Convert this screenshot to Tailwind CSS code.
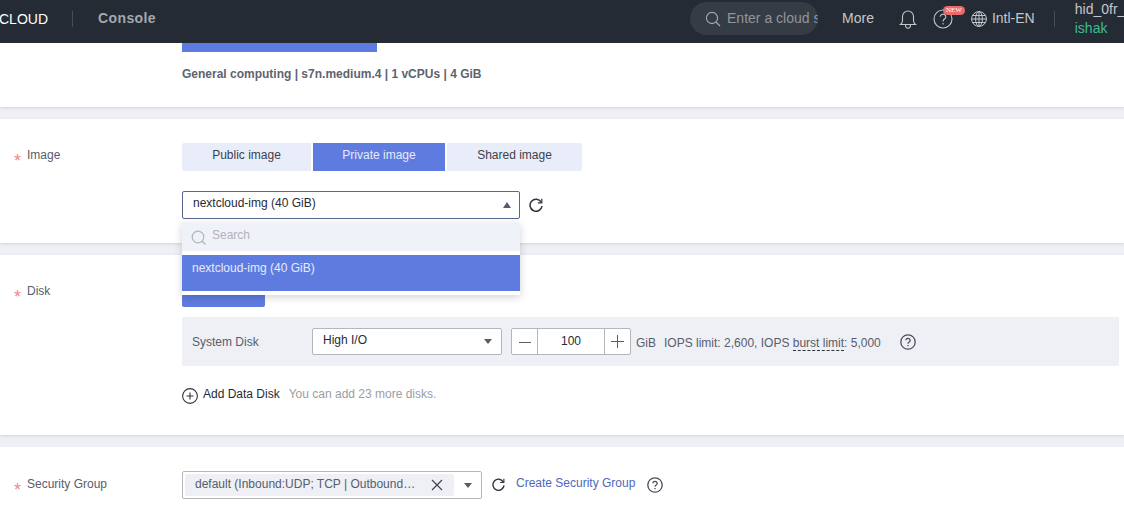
<!DOCTYPE html>
<html lang="en">

<head>
    <meta charset="UTF-8">
    <title>Buy ECS</title>
    <script src="https://cdn.jsdelivr.net/npm/@tailwindcss/browser@4"></script>
</head>

<body class="bg-[#eef0f5] font-['Liberation_Sans',Arial,sans-serif] text-[12px] text-[#575d6c]">
    <div class="relative h-[509px] w-[1124px] overflow-hidden">

        <!-- Navbar -->
        <nav class="relative z-10 flex h-[43px] items-center whitespace-nowrap bg-[#252b35] pb-[6px] text-[#c4c6cc] *:shrink-0">
            <div class="ml-[-10px] w-[58px] text-right text-[14px] leading-none text-white">CLOUD</div>
            <div class="ml-[24px] h-[16px] w-px bg-[#474c55]"></div>
            <div class="ml-[25px] text-[14px] font-bold tracking-[0.4px] text-[#a5a8ae]">Console</div>
            <div class="ml-[534px] flex h-[33px] w-[128px] items-center overflow-hidden rounded-full bg-[#363c46] pl-[15px]">
                <svg class="h-[16px] w-[16px] shrink-0" viewBox="0 0 16 16" fill="none" stroke="#a7aab0" stroke-width="1.1"><circle cx="7" cy="7" r="5.6"/><path d="M11 11l4 4"/></svg>
                <span class="ml-[6px] whitespace-nowrap text-[14px] text-[#92959c]">Enter a cloud service</span>
            </div>
            <div class="ml-[24px] text-[14px]">More</div>
            <svg class="ml-[25px] h-[20px] w-[18px]" viewBox="0 0 18 20" fill="none" stroke="#c4c6cc" stroke-width="1.1"><path d="M1.500 15.500c1.500-1.200 2-2.200 2-4V7.500a5.500 5.500 0 0 1 11 0v4c0 1.800.5 2.800 2 4z"/><path d="M6.500 15.500c0 5 5 5 5 0"/></svg>
            <div class="relative ml-[16px] h-[20px] w-[20px]">
                <svg class="h-[20px] w-[20px]" viewBox="0 0 20 20" fill="none" stroke="#c4c6cc" stroke-width="1.100"><circle cx="10" cy="10" r="9"/><path d="M7.200 7.800a2.800 2.600 0 1 1 4.300 2.200c-1 .7-1.500 1.200-1.500 2.400"/><path d="M10 14v1.500"/></svg>
                <span class="absolute left-[10px] top-[-3px] flex h-[9px] w-[22px] items-center justify-center rounded-full bg-[#e86a6a] font-['Liberation_Serif',serif] text-[7px] text-white">NEW</span>
            </div>
            <svg class="ml-[18px] h-[16px] w-[16px]" viewBox="0 0 16 16" fill="none" stroke="#c4c6cc" stroke-width="1"><circle cx="8" cy="8" r="7.400"/><ellipse cx="8" cy="8" rx="3.400" ry="7.400"/><path d="M.6 8h14.800M1.800 4.500h12.400M1.800 11.500h12.400M8 .6v14.800"/></svg>
            <div class="ml-[5px] text-[14px]">Intl-EN</div>
            <div class="ml-[19px] h-[16px] w-px bg-[#474c55]"></div>
            <div class="ml-[20px] text-[14px] leading-[19px]">
                <div>hid_0fr_</div>
                <div class="text-[#3dbb8f]">ishak</div>
            </div>
        </nav>

        <!-- Flavor -->
        <section class="h-[64px] bg-white pl-[182px] shadow-[0_1px_3px_rgba(0,0,0,0.12)]">
            <div class="h-[9px] w-[195px] bg-[#5e7ce0]"></div>
            <div class="mt-[15px] text-[12px] font-bold leading-[14px] text-[#5e636f]">General computing | s7n.medium.4 | 1 vCPUs | 4 GiB</div>
        </section>

        <!-- Image -->
        <section class="mt-[12px] flex h-[124px] bg-white pt-[24px] shadow-[0_1px_3px_rgba(0,0,0,0.12)]">
            <div class="flex w-[182px] pl-[14px] leading-[24px]">
                <span class="mt-[6px] w-[13px] text-[18px] text-[#ec8a8a]">*</span><span>Image</span>
            </div>
            <div>
                <div class="flex gap-[2px] text-center">
                    <div class="h-[28px] w-[129px] rounded-l-[2px] bg-[#e9edfa] leading-[24px] text-[#3c414c]">Public image</div>
                    <div class="h-[28px] w-[132px] bg-[#5e7ce0] leading-[24px] text-[#e6eafa]">Private image</div>
                    <div class="h-[28px] w-[135px] rounded-r-[2px] bg-[#e9edfa] leading-[24px] text-[#3c414c]">Shared image</div>
                </div>
                <div class="mt-[20px] flex items-center">
                    <div class="flex h-[28px] w-[338px] items-center justify-between rounded-[2px] border border-[#56688f] pl-[10px] pr-[8px] text-[#252b35]">
                        <span class="mb-[5px]">nextcloud-img (40 GiB)</span>
                        <span class="h-0 w-0 border-x-[4px] border-b-[6px] border-x-transparent border-b-[#575d6c]"></span>
                    </div>
                    <svg class="ml-[9px] h-[14px] w-[14px]" viewBox="0 0 14 14" fill="none" stroke="#30343c" stroke-width="1.500"><path d="M12.200 4.200A6 6 0 1 0 13 8"/><path d="M12.800 .8v4h-4" stroke-width="1.200"/></svg>
                </div>
            </div>
        </section>

        <!-- Disk -->
        <section class="mt-[12px] flex h-[180px] bg-white shadow-[0_1px_3px_rgba(0,0,0,0.12)]">
            <div class="flex w-[182px] pl-[14px] pt-[24px] leading-[24px]">
                <span class="mt-[6px] w-[13px] text-[18px] text-[#ec8a8a]">*</span><span>Disk</span>
            </div>
            <div class="flex-1">
                <div class="h-[52px] pt-[24px]">
                    <div class="h-[28px] w-[83px] rounded-[2px] bg-[#5e7ce0]"></div>
                </div>
                <div class="mt-[10px] flex h-[49px] w-[937px] items-center bg-[#eef0f5] pl-[10px]">
                    <span class="mt-[1px] w-[120px]">System Disk</span>
                    <div class="flex h-[27px] w-[190px] items-center justify-between rounded-[2px] border border-[#b4b6bc] bg-white pl-[10px] pr-[9px] text-[#252b35]">
                        <span class="mb-[3px]">High I/O</span>
                        <span class="h-0 w-0 border-x-[4px] border-t-[5px] border-x-transparent border-t-[#575d6c]"></span>
                    </div>
                    <div class="ml-[9px] flex h-[27px] w-[120px] rounded-[2px] border border-[#b4b6bc] bg-white text-[#252b35]">
                        <div class="flex w-[26px] items-center justify-center border-r border-[#b4b6bc] text-[#575d6c]"><span class="mt-[2px] h-[1.500px] w-[12px] bg-[#575d6c]"></span></div>
                        <div class="flex-1 pt-[3px] text-center">100</div>
                        <div class="relative w-[26px] border-l border-[#b4b6bc]">
                            <span class="absolute left-[6px] top-[12px] h-px w-[13px] bg-[#575d6c]"></span>
                            <span class="absolute left-[12px] top-[6px] h-[13px] w-px bg-[#575d6c]"></span>
                        </div>
                    </div>
                    <span class="ml-[5px] mt-[2px]">GiB</span>
                    <span class="ml-[8px] mt-[2px]">IOPS limit: 2,600, IOPS <span class="border-b border-dashed border-[#30343c]">burst limit</span>: 5,000</span>
                    <svg class="ml-[19px] mt-[1px] h-[16px] w-[16px]" viewBox="0 0 16 16" fill="none" stroke="#4a4f5a" stroke-width="1.300"><circle cx="8" cy="8" r="7.200"/><path d="M5.800 6.300a2.200 2 0 1 1 3.400 1.700c-.8.5-1.200.9-1.200 1.800"/><path d="M8 11v1.300"/></svg>
                </div>
                <div class="mt-[18px] flex items-center">
                    <svg class="mt-[4px] h-[16px] w-[16px]" viewBox="0 0 16 16" fill="none" stroke="#30343c" stroke-width="1.100"><circle cx="8" cy="8" r="7.400"/><path d="M4.500 8h7M8 4.500v7"/></svg>
                    <span class="ml-[5px] text-[#252b35]">Add Data Disk</span>
                    <span class="ml-[9px] text-[#9a9da5]">You can add 23 more disks.</span>
                </div>
            </div>
        </section>

        <!-- Security Group -->
        <section class="mt-[12px] flex h-[62px] bg-white pt-[24px]">
            <div class="flex w-[182px] pl-[14px] pt-[1px] leading-[24px]">
                <span class="mt-[6px] w-[13px] text-[18px] text-[#ec8a8a]">*</span><span>Security Group</span>
            </div>
            <div class="flex h-[28px] w-[300px] items-center rounded-[2px] border border-[#b4b6bc] pl-[2px]">
                <div class="flex h-[22px] w-[269px] items-center rounded-[2px] bg-[#eef0f5] pl-[10px]">
                    <span class="mb-[2px] w-[222px] overflow-hidden text-ellipsis whitespace-nowrap">default (Inbound:UDP; TCP | Outbound:ALL)</span>
                    <svg class="ml-[14px] h-[12px] w-[12px]" viewBox="0 0 12 12" fill="none" stroke="#40444e" stroke-width="1.200"><path d="M1 1l10 10M11 1L1 11"/></svg>
                </div>
                <span class="ml-[10px] h-0 w-0 border-x-[4px] border-t-[5px] border-x-transparent border-t-[#575d6c]"></span>
            </div>
            <svg class="ml-[10px] mt-[7px] h-[13px] w-[13px]" viewBox="0 0 14 14" fill="none" stroke="#30343c" stroke-width="1.500"><path d="M12.200 4.200A6 6 0 1 0 13 8"/><path d="M12.800 .8v4h-4" stroke-width="1.200"/></svg>
            <span class="ml-[11px] leading-[24px] text-[#4f68b8]">Create Security Group</span>
            <svg class="ml-[12px] mt-[6px] h-[16px] w-[16px]" viewBox="0 0 16 16" fill="none" stroke="#4a4f5a" stroke-width="1.300"><circle cx="8" cy="8" r="7.200"/><path d="M5.800 6.300a2.200 2 0 1 1 3.400 1.700c-.8.5-1.200.9-1.200 1.800"/><path d="M8 11v1.300"/></svg>
        </section>

        <!-- Image dropdown -->
        <div class="absolute left-[182px] top-[223px] h-[72px] w-[338px] bg-white shadow-[0_2px_8px_rgba(0,0,0,0.18)]">
            <div class="flex h-[28px] items-center bg-[#f0f2f9] pl-[9px]">
                <svg class="mt-[2px] h-[16px] w-[16px]" viewBox="0 0 16 16" fill="none" stroke="#b0b3ba" stroke-width="1.200"><circle cx="7" cy="7" r="5.800"/><path d="M11 11l3.500 3.500"/></svg>
                <span class="mb-[4px] ml-[5px] text-[#b0b3ba]">Search</span>
            </div>
            <div class="mt-[4px] h-[36px] bg-[#5e7ce0] pl-[10px] pt-[6px] leading-[14px] text-[#e6eafa]">nextcloud-img (40 GiB)</div>
        </div>
    </div>
</body>

</html>
